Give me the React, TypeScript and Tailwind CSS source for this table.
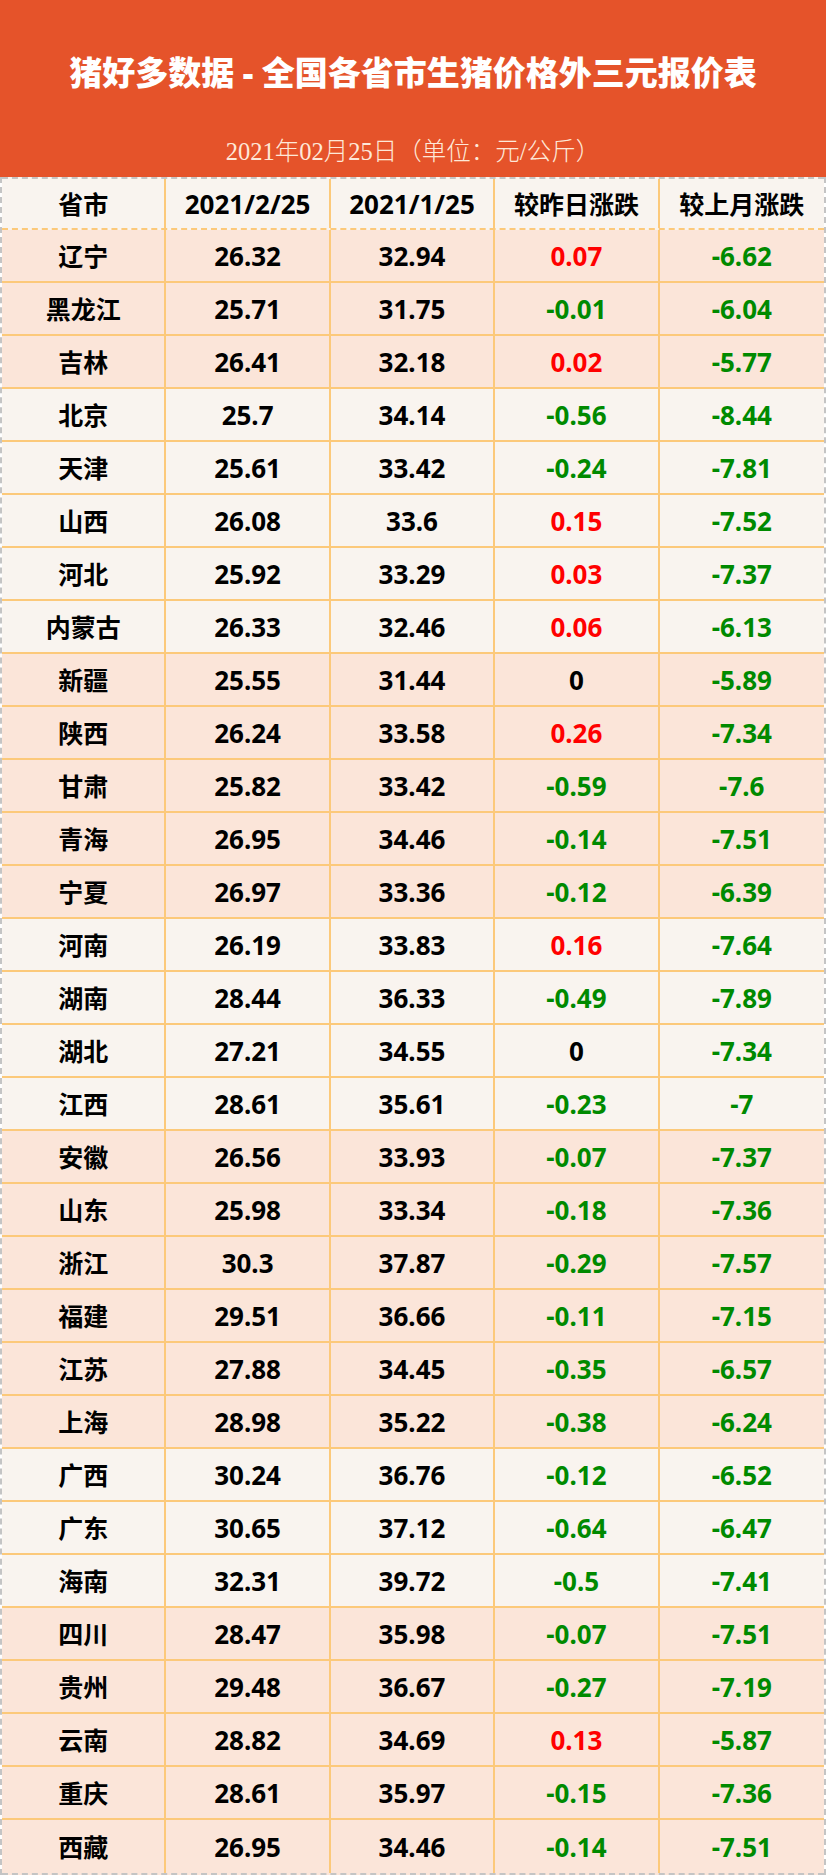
import React from "react";

type Row = [string, string, string, string, string];

const rows: Row[] = [
  ["辽宁", "26.32", "32.94", "0.07", "-6.62"],
  ["黑龙江", "25.71", "31.75", "-0.01", "-6.04"],
  ["吉林", "26.41", "32.18", "0.02", "-5.77"],
  ["北京", "25.7", "34.14", "-0.56", "-8.44"],
  ["天津", "25.61", "33.42", "-0.24", "-7.81"],
  ["山西", "26.08", "33.6", "0.15", "-7.52"],
  ["河北", "25.92", "33.29", "0.03", "-7.37"],
  ["内蒙古", "26.33", "32.46", "0.06", "-6.13"],
  ["新疆", "25.55", "31.44", "0", "-5.89"],
  ["陕西", "26.24", "33.58", "0.26", "-7.34"],
  ["甘肃", "25.82", "33.42", "-0.59", "-7.6"],
  ["青海", "26.95", "34.46", "-0.14", "-7.51"],
  ["宁夏", "26.97", "33.36", "-0.12", "-6.39"],
  ["河南", "26.19", "33.83", "0.16", "-7.64"],
  ["湖南", "28.44", "36.33", "-0.49", "-7.89"],
  ["湖北", "27.21", "34.55", "0", "-7.34"],
  ["江西", "28.61", "35.61", "-0.23", "-7"],
  ["安徽", "26.56", "33.93", "-0.07", "-7.37"],
  ["山东", "25.98", "33.34", "-0.18", "-7.36"],
  ["浙江", "30.3", "37.87", "-0.29", "-7.57"],
  ["福建", "29.51", "36.66", "-0.11", "-7.15"],
  ["江苏", "27.88", "34.45", "-0.35", "-6.57"],
  ["上海", "28.98", "35.22", "-0.38", "-6.24"],
  ["广西", "30.24", "36.76", "-0.12", "-6.52"],
  ["广东", "30.65", "37.12", "-0.64", "-6.47"],
  ["海南", "32.31", "39.72", "-0.5", "-7.41"],
  ["四川", "28.47", "35.98", "-0.07", "-7.51"],
  ["贵州", "29.48", "36.67", "-0.27", "-7.19"],
  ["云南", "28.82", "34.69", "0.13", "-5.87"],
  ["重庆", "28.61", "35.97", "-0.15", "-7.36"],
  ["西藏", "26.95", "34.46", "-0.14", "-7.51"],
];

const lightRows = new Set([3, 4, 5, 6, 7, 13, 14, 15, 16, 23, 24, 25]);

function changeColor(v: string): string {
  const n = parseFloat(v);
  if (n > 0) return "text-[#ff0000]";
  if (n < 0) return "text-[#008a00]";
  return "text-black";
}

const font = { fontFamily: '"Noto Sans", "Noto Sans CJK SC", sans-serif' };

function Cell({
  children,
  last,
  cls,
}: {
  children: React.ReactNode;
  last?: boolean;
  cls?: string;
}) {
  return (
    <div
      className={
        "flex items-center justify-center pt-[2px] font-bold " +
        (last ? "" : "border-r-2 border-[#fcc97a] ") +
        (cls ?? "")
      }
    >
      {children}
    </div>
  );
}

export default function App() {
  return (
    <div className="w-[826px] bg-white" style={font}>
      <div className="h-[177px] bg-[#e5532a] flex flex-col items-center">
        <div className="mt-[52px] text-[33px] leading-[42px] font-black text-white">
          猪好多数据 - 全国各省市生猪价格外三元报价表
        </div>
        <div
          className="mt-[43px] text-[24.5px] leading-[30px] font-light text-[#fee8d8]"
          style={{ fontFamily: '"Liberation Serif", "Noto Sans CJK SC", serif' }}
        >
          2021年02月25日（单位：元/公斤）
        </div>
      </div>
      <div className="border-x-2 border-dashed border-[#c4c4c4]">
        <div className="grid grid-cols-5 h-[53px] bg-[#f9f4ef] border-t-2 border-dashed border-t-[#c4c4c4] border-b-2 border-b-[#fcc97a]">
          <Cell cls="text-[25px] text-black">省市</Cell>
          <Cell cls="text-[26px] text-black">2021/2/25</Cell>
          <Cell cls="text-[26px] text-black">2021/1/25</Cell>
          <Cell cls="text-[25px] text-black">较昨日涨跌</Cell>
          <Cell last cls="text-[25px] text-black">
            较上月涨跌
          </Cell>
        </div>
        {rows.map((r, i) => {
          const isLast = i === rows.length - 1;
          return (
            <div
              key={r[0]}
              className={
                "grid grid-cols-5 " +
                (isLast
                  ? "h-[55px] border-b-2 border-dashed border-[#c4c4c4] "
                  : "h-[53px] border-b-2 border-[#fcc97a] ") +
                (lightRows.has(i) ? "bg-[#f9f4ef]" : "bg-[#fbe5d9]")
              }
            >
              <Cell cls="text-[25px] text-black">{r[0]}</Cell>
              <Cell cls="text-[26px] text-black">{r[1]}</Cell>
              <Cell cls="text-[26px] text-black">{r[2]}</Cell>
              <Cell cls={"text-[26px] " + changeColor(r[3])}>{r[3]}</Cell>
              <Cell last cls={"text-[26px] " + changeColor(r[4])}>
                {r[4]}
              </Cell>
            </div>
          );
        })}
      </div>
    </div>
  );
}
